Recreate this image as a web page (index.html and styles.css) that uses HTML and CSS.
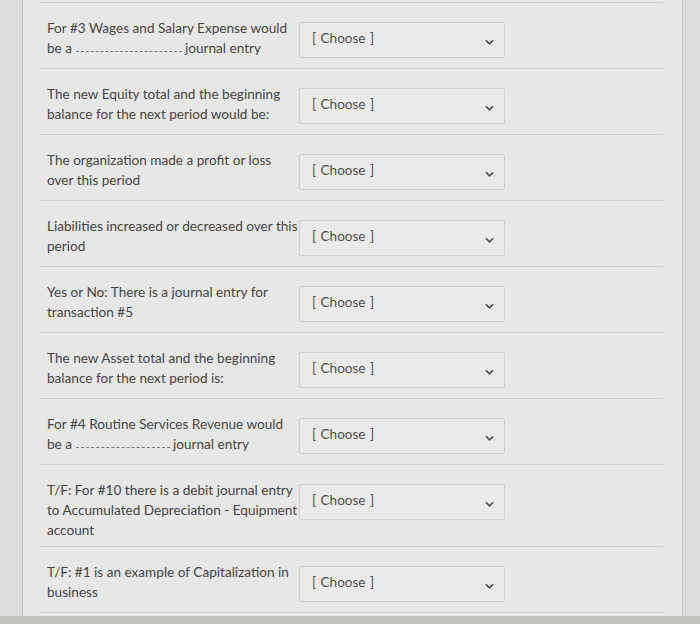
FILE: index.html
```html
<!DOCTYPE html>
<html lang="en">
<head>
<meta charset="utf-8">
<title>Quiz questions</title>
<link rel="stylesheet" href="styles.css">
</head>
<body>
<div class="page">
  <div class="list">
    <div class="question">
      <div class="label">For #3 Wages and Salary Expense would <span class="line">be a <span class="blank wide"></span> journal entry</span></div>
      <div class="select"><span class="choose">[ Choose ]</span><svg class="chev" viewBox="0 0 10 6" width="9" height="6"><path d="M1 1 L5 5 L9 1" fill="none" stroke="#4a4a4a" stroke-width="1.8"/></svg></div>
    </div>
    <div class="question">
      <div class="label">The new Equity total and the beginning balance for the next period would be:</div>
      <div class="select"><span class="choose">[ Choose ]</span><svg class="chev" viewBox="0 0 10 6" width="9" height="6"><path d="M1 1 L5 5 L9 1" fill="none" stroke="#4a4a4a" stroke-width="1.8"/></svg></div>
    </div>
    <div class="question">
      <div class="label">The organization made a profit or loss over this period</div>
      <div class="select"><span class="choose">[ Choose ]</span><svg class="chev" viewBox="0 0 10 6" width="9" height="6"><path d="M1 1 L5 5 L9 1" fill="none" stroke="#4a4a4a" stroke-width="1.8"/></svg></div>
    </div>
    <div class="question">
      <div class="label">Liabilities increased or decreased over this period</div>
      <div class="select"><span class="choose">[ Choose ]</span><svg class="chev" viewBox="0 0 10 6" width="9" height="6"><path d="M1 1 L5 5 L9 1" fill="none" stroke="#4a4a4a" stroke-width="1.8"/></svg></div>
    </div>
    <div class="question">
      <div class="label">Yes or No: There is a journal entry for transaction #5</div>
      <div class="select"><span class="choose">[ Choose ]</span><svg class="chev" viewBox="0 0 10 6" width="9" height="6"><path d="M1 1 L5 5 L9 1" fill="none" stroke="#4a4a4a" stroke-width="1.8"/></svg></div>
    </div>
    <div class="question">
      <div class="label">The new Asset total and the beginning balance for the next period is:</div>
      <div class="select"><span class="choose">[ Choose ]</span><svg class="chev" viewBox="0 0 10 6" width="9" height="6"><path d="M1 1 L5 5 L9 1" fill="none" stroke="#4a4a4a" stroke-width="1.8"/></svg></div>
    </div>
    <div class="question">
      <div class="label">For #4 Routine Services Revenue would <span class="line">be a <span class="blank narrow"></span> journal entry</span></div>
      <div class="select"><span class="choose">[ Choose ]</span><svg class="chev" viewBox="0 0 10 6" width="9" height="6"><path d="M1 1 L5 5 L9 1" fill="none" stroke="#4a4a4a" stroke-width="1.8"/></svg></div>
    </div>
    <div class="question">
      <div class="label">T/F: For #10 there is a debit journal entry to Accumulated Depreciation - Equipment account</div>
      <div class="select"><span class="choose">[ Choose ]</span><svg class="chev" viewBox="0 0 10 6" width="9" height="6"><path d="M1 1 L5 5 L9 1" fill="none" stroke="#4a4a4a" stroke-width="1.8"/></svg></div>
    </div>
    <div class="question last">
      <div class="label">T/F: #1 is an example of Capitalization in business</div>
      <div class="select"><span class="choose">[ Choose ]</span><svg class="chev" viewBox="0 0 10 6" width="9" height="6"><path d="M1 1 L5 5 L9 1" fill="none" stroke="#4a4a4a" stroke-width="1.8"/></svg></div>
    </div>
  </div>
</div>
<div class="strip"></div>
</body>
</html>
```
FILE: styles.css
```css
html, body {
  margin: 0;
  padding: 0;
}
body {
  width: 700px;
  height: 624px;
  overflow: hidden;
  background: #dcdcda;
  display: flex;
  flex-direction: column;
  font-family: Lato, "Liberation Sans", sans-serif;
  color: #454545;
}
.page {
  flex: 1;
  margin-left: 22px;
  width: 661px;
  border-left: 1px solid #c2c2c0;
  border-right: 1px solid #c6c6c4;
  background: #e7e7e5;
  padding: 2px 19px 0 17px;
  box-sizing: border-box;
}
.list {
  display: flex;
  flex-direction: column;
}
.question {
  display: flex;
  align-items: flex-start;
  border-top: 1px solid #d2d2d0;
  padding: 15px 0 6px 7px;
}
.question.last {
  border-bottom: 1px solid #d2d2d0;
}
.label {
  width: 252px;
  font-size: 13.6px;
  line-height: 20px;
  flex: none;
}
.line {
  white-space: nowrap;
}
.blank {
  display: inline-block;
  height: 1px;
  border-bottom: 1px dashed #7a7a7a;
  vertical-align: 1px;
}
.blank.wide {
  width: 106px;
}
.blank.narrow {
  width: 94px;
}
.select {
  flex: none;
  width: 206px;
  height: 36px;
  box-sizing: border-box;
  margin: 4px 0;
  border: 1px solid #d0d0ce;
  border-radius: 2px;
  background: #eaeae8;
  display: flex;
  justify-content: space-between;
  align-items: center;
  padding: 0 10px 0 12px;
}
.choose {
  font-size: 13.5px;
  color: #505050;
  align-self: flex-start;
  margin-top: 7px;
  word-spacing: 1px;
}
.chev {
  margin-top: 3px;
}
.strip {
  height: 8px;
  background: #c3c1bd;
  flex: none;
}
```
